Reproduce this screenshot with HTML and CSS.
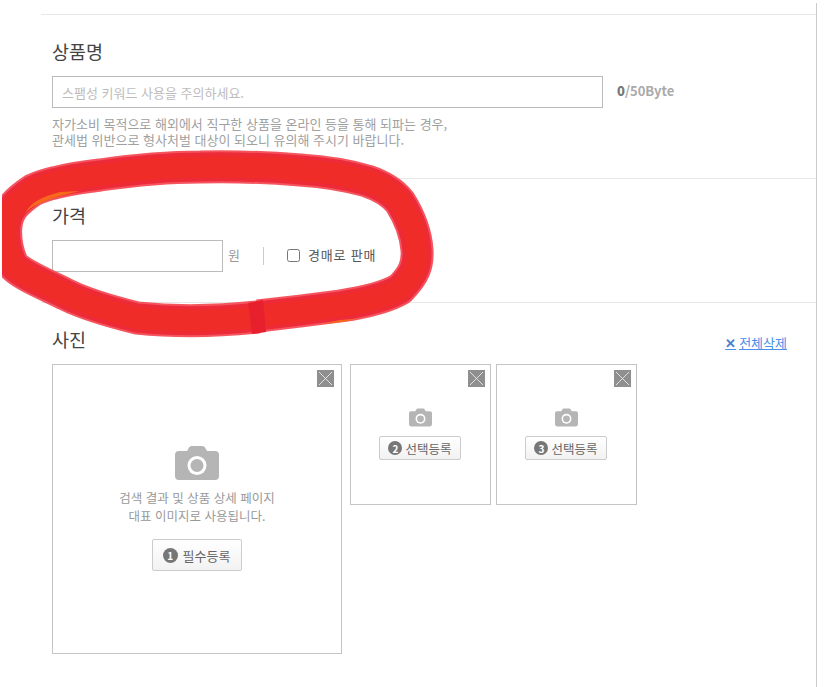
FILE: index.html
```html
<!DOCTYPE html>
<html lang="ko">
<head>
    <meta charset="UTF-8">
    <title>상품 등록</title>
    <link rel="stylesheet" href="styles.css">
</head>
<body>
    <svg width="0" height="0" class="defs">
        <symbol id="camera" viewBox="0 0 44 34">
            <path d="M4 5h8l2-3.500q.8-1.500 2.500-1.500h11q1.700 0 2.500 1.500l2 3.500h8q4 0 4 4v21q0 4-4 4h-36q-4 0-4-4v-21q0-4 4-4z" fill="#b5b5b5"/>
            <circle cx="22" cy="19.500" r="9.500" fill="#fff"/>
            <circle cx="22" cy="19.500" r="6.500" fill="#b5b5b5"/>
        </symbol>
        <symbol id="close" viewBox="0 0 17 17">
            <rect width="17" height="17" fill="#8f8f8f"/>
            <path d="M2 2l13 13M15 2l-13 13" stroke="#f4f4f4" stroke-width=".8"/>
        </symbol>
    </svg>

    <div class="page">
        <!-- 상품명 -->
        <section class="sec sec-name">
            <h3 class="sec-title">상품명</h3>
            <div class="row">
                <input type="text" class="name-input" placeholder="스팸성 키워드 사용을 주의하세요.">
                <span class="count"><b>0</b>/50Byte</span>
            </div>
            <p class="help">자가소비 목적으로 해외에서 직구한 상품을 온라인 등을 통해 되파는 경우,<br>관세법 위반으로 형사처벌 대상이 되오니 유의해 주시기 바랍니다.</p>
        </section>

        <!-- 가격 -->
        <section class="sec sec-price">
            <h3 class="sec-title">가격</h3>
            <div class="row">
                <input type="text" class="price-input">
                <span class="unit">원</span>
                <span class="divider"></span>
                <label class="auction"><input type="checkbox"> 경매로 판매</label>
            </div>
        </section>

        <!-- 사진 -->
        <section class="sec sec-photo">
            <div class="photo-head">
                <h3 class="sec-title">사진</h3>
                <a href="#" class="del-all"><span class="del-x">✕</span><span class="del-text">전체삭제</span></a>
            </div>
            <div class="photos">
                <div class="photo photo-main">
                    <svg class="photo-close"><use href="#close"/></svg>
                    <svg class="cam-big"><use href="#camera"/></svg>
                    <p class="photo-desc">검색 결과 및 상품 상세 페이지<br>대표 이미지로 사용됩니다.</p>
                    <button class="btn btn-big"><span class="num num-big">1</span>필수등록</button>
                </div>
                <div class="photo photo-sub">
                    <svg class="photo-close"><use href="#close"/></svg>
                    <svg class="cam-small"><use href="#camera"/></svg>
                    <button class="btn"><span class="num">2</span>선택등록</button>
                </div>
                <div class="photo photo-sub">
                    <svg class="photo-close"><use href="#close"/></svg>
                    <svg class="cam-small"><use href="#camera"/></svg>
                    <button class="btn"><span class="num">3</span>선택등록</button>
                </div>
            </div>
        </section>
    </div>

    <!-- 빨간 동그라미 표시 -->
    <svg class="scribble" width="826" height="687" viewBox="0 0 826 687">
        <path class="stroke-a" d="M258 317C220 321 175 322 137 318C105 310 85 304 67 295C45 284 22 275 13 265C6 250 5 235 6 225C8 212 12 204 33 190C50 182 75 178 100 175C135 170 170 167 200 167C240 166 275 168 300 170C330 172 350 176 367 181C382 186 392 192 400 202C410 218 416 235 417 250C418 265 414 275 400 289C385 298 360 303 340 306C310 310 285 313 258 316"/>
        <path class="stroke-b" d="M258 317C220 321 175 322 137 318C105 310 85 304 67 295C45 284 22 275 13 265C6 250 5 235 6 225C8 212 12 204 33 190C50 182 75 178 100 175C135 170 170 167 200 167C240 166 275 168 300 170C330 172 350 176 367 181C382 186 392 192 400 202C410 218 416 235 417 250C418 265 414 275 400 289C385 298 360 303 340 306C310 310 285 313 258 316"/>
        <path class="stroke-c" d="M258 317C220 321 175 322 137 318C105 310 85 304 67 295C45 284 22 275 13 265C6 250 5 235 6 225C8 212 12 204 33 190C50 182 75 178 100 175C135 170 170 167 200 167C240 166 275 168 300 170C330 172 350 176 367 181C382 186 392 192 400 202C410 218 416 235 417 250C418 265 414 275 400 289C385 298 360 303 340 306C310 310 285 313 258 316"/>
        <path class="sliver" d="M25 214C33 203 55 197 80 191L60 192C42 197 30 202 25 214z"/>
        <path class="sliver" d="M322 324C335 323 345 322 356 319L340 320z"/>
        <path class="overlap" d="M248 303l15-3 3 32-14 2z"/>
    </svg>
</body>
</html>
```

FILE: styles.css
```css
body {
    margin: 0;
    background: #fff;
    font-family: "Noto Sans CJK KR", "Noto Sans", sans-serif;
    color: #444;
}
.defs {
    position: absolute;
}
.page {
    margin-left: 41px;
    margin-top: 3px;
    width: 775px;
    height: 673px;
    border-right: 1px solid #ccc;
    padding-top: 11px;
}
.sec {
    border-top: 1px solid #e8e8e8;
    padding-left: 11px;
}
.sec-name {
    height: 164px;
    padding-top: 23px;
    box-sizing: border-box;
}
.sec-price {
    height: 124px;
    padding-top: 23px;
    box-sizing: border-box;
}
.sec-photo {
    padding-top: 23px;
}
.sec-title {
    margin: 0;
    font-size: 18.500px;
    font-weight: 400;
    line-height: 26px;
    color: #444;
}
.row {
    display: flex;
    align-items: center;
    margin-top: 12px;
}
input[type="text"] {
    box-sizing: border-box;
    height: 32px;
    border: 1px solid #bbb;
    padding: 0 9px;
    font-family: inherit;
    font-size: 13px;
}
input::placeholder {
    color: #bdbdbd;
}
.name-input {
    width: 551px;
}
.count {
    margin-left: 14px;
    font-size: 13px;
    font-weight: 700;
    color: #aaa;
    position: relative;
    top: -2px;
}
.count b {
    color: #777;
}
.help {
    margin: 8px 0 0;
    font-size: 13px;
    line-height: 16px;
    color: #a0a0a0;
}
.price-input {
    width: 171px;
}
.unit {
    margin-left: 5px;
    font-size: 13px;
    color: #999;
    position: relative;
    top: -2px;
}
.divider {
    width: 1px;
    height: 18px;
    margin-left: 23px;
    background: #ccc;
}
.auction {
    display: flex;
    align-items: center;
    margin-left: 23px;
    font-size: 13px;
    letter-spacing: .8px;
    color: #555;
    position: relative;
    top: -2px;
}
.auction input {
    width: 13px;
    height: 13px;
    margin: 2px 8px 0 0;
}
.photo-head {
    display: flex;
    justify-content: space-between;
    align-items: center;
    width: 735px;
    height: 26px;
}
.del-all {
    display: flex;
    align-items: center;
    font-size: 13px;
    color: #4a8fe8;
    margin-top: 6px;
}
.del-x {
    font-size: 13px;
    font-weight: 700;
    color: #4a7fd0;
    margin-right: 3px;
}
.del-text {
    text-decoration: underline;
}
.photos {
    display: flex;
    align-items: flex-start;
    gap: 5px;
    margin-top: 12px;
}
.photo {
    position: relative;
    box-sizing: border-box;
    border: 1px solid #c4c4c4;
    display: flex;
    flex-direction: column;
    align-items: center;
}
.photo-main {
    width: 290px;
    height: 290px;
    margin-right: 3px;
    padding-top: 81px;
}
.photo-sub {
    width: 141px;
    height: 141px;
    padding-top: 43px;
}
.photo-close {
    position: absolute;
    top: 5px;
    right: 5px;
    width: 17px;
    height: 17px;
}
.photo-main .photo-close {
    right: 7px;
}
.cam-big {
    width: 44px;
    height: 34px;
}
.cam-small {
    width: 23px;
    height: 19px;
}
.photo-desc {
    margin: 9px 0 0;
    font-size: 12.500px;
    line-height: 18px;
    text-align: center;
    color: #999;
}
.btn {
    display: flex;
    align-items: center;
    justify-content: center;
    box-sizing: border-box;
    width: 82px;
    height: 24px;
    margin: 9px 1px 0 0;
    padding: 0;
    border: 1px solid #ccc;
    border-radius: 2px;
    background: linear-gradient(#fff, #f2f2f2);
    font-family: inherit;
    font-size: 12.500px;
    color: #666;
}
.btn-big {
    width: 90px;
    height: 32px;
    margin: 14px 1px 0 0;
    font-size: 13px;
}
.num {
    display: inline-flex;
    align-items: center;
    justify-content: center;
    width: 14px;
    height: 14px;
    margin-right: 3px;
    border-radius: 50%;
    background: #777;
    color: #fff;
    font-size: 10px;
    font-weight: 700;
}
.num-big {
    width: 15px;
    height: 15px;
    margin-right: 5px;
}
.scribble {
    position: absolute;
    top: 0;
    left: 0;
    pointer-events: none;
    clip-path: inset(0 0 0 2px);
}
.scribble path {
    fill: none;
}
.scribble .stroke-a {
    stroke: #f4555f;
    stroke-width: 33px;
}
.scribble .stroke-b {
    stroke: #ec2a38;
    stroke-width: 29px;
}
.scribble .stroke-c {
    stroke: #f02c28;
    stroke-width: 22px;
}
.scribble .sliver {
    fill: #f7681c;
}
.scribble .overlap {
    fill: #e8202e;
}
```
